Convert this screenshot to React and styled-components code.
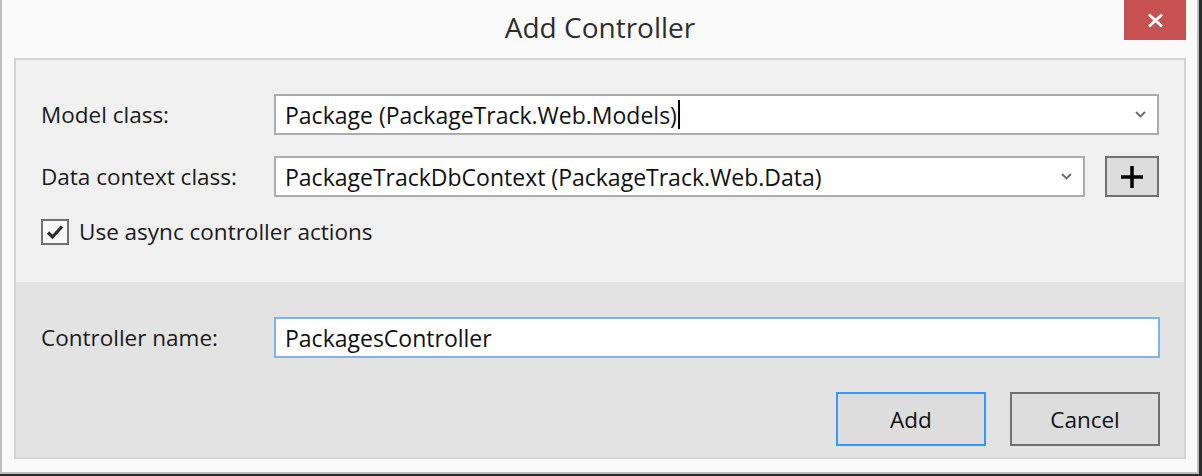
import styled, { createGlobalStyle } from 'styled-components';

const GlobalStyle = createGlobalStyle`
  html, body {
    margin: 0;
    padding: 0;
    background: #2b2b2b;
  }
  body {
    font-family: "Open Sans", "Noto Sans", sans-serif;
  }
`;

export default function App() {
  return (
    <>
      <GlobalStyle />
      <Window>
        <TitleBar>
          <span />
          <Title>Add Controller</Title>
          <CloseButton type="button" aria-label="Close">
            <svg width="17" height="15" viewBox="0 0 17 15">
              <path d="M2 1.5 L15 13.5 M15 1.5 L2 13.5" stroke="#fff" strokeWidth="3" />
            </svg>
          </CloseButton>
        </TitleBar>
        <Panel>
          <FormSection>
            <FieldGrid>
              <Label>Model class:</Label>
              <Select>
                <SelectText>
                  Package (PackageTrack.Web.Models)
                  <Caret />
                </SelectText>
                <Chevron />
              </Select>

              <Label>Data context class:</Label>
              <InlineRow>
                <Select>
                  <SelectText>PackageTrackDbContext (PackageTrack.Web.Data)</SelectText>
                  <Chevron />
                </Select>
                <PlusButton type="button" aria-label="Add data context">
                  <svg width="24" height="24" viewBox="0 0 24 24">
                    <path d="M12 1 V23 M1 12 H23" stroke="#000" strokeWidth="3.5" />
                  </svg>
                </PlusButton>
              </InlineRow>
            </FieldGrid>
            <CheckRow>
              <CheckBox>
                <svg width="18" height="16" viewBox="0 0 18 16">
                  <path d="M2 8.5 L6.5 13 L16 2.5" stroke="#2a2a2a" strokeWidth="3.2" fill="none" />
                </svg>
              </CheckBox>
              <CheckLabel>Use async controller actions</CheckLabel>
            </CheckRow>
          </FormSection>

          <FooterSection>
            <FieldGrid>
              <Label>Controller name:</Label>
              <TextBox>PackagesController</TextBox>
            </FieldGrid>
            <ButtonRow>
              <DialogButton type="button" $primary>Add</DialogButton>
              <DialogButton type="button">Cancel</DialogButton>
            </ButtonRow>
          </FooterSection>
        </Panel>
      </Window>
    </>
  );
}

function Chevron() {
  return (
    <ChevronIcon width="11" height="7" viewBox="0 0 11 7">
      <path d="M1 1 L5.5 5.5 L10 1" stroke="#6a6a6a" strokeWidth="1.8" fill="none" />
    </ChevronIcon>
  );
}

const Window = styled.div`
  box-sizing: border-box;
  width: 1199px;
  height: 474px;
  background: #fafafa;
  border: 2px solid #bdbdbd;
  border-top: none;
  padding: 0 11px 13px 12px;
  display: flex;
  flex-direction: column;
`;

const TitleBar = styled.div`
  height: 58px;
  flex: none;
  display: grid;
  grid-template-columns: 1fr auto 1fr;
`;

const Title = styled.h1`
  margin: 0;
  padding-top: 10px;
  font-size: 28px;
  line-height: 34px;
  font-weight: 400;
  color: #2e2e2e;
`;

const CloseButton = styled.button`
  justify-self: end;
  align-self: start;
  width: 62px;
  height: 40px;
  border: none;
  padding: 0;
  background: #c75050;
  display: flex;
  align-items: center;
  justify-content: center;
`;

const Panel = styled.div`
  flex: 1;
  display: flex;
  flex-direction: column;
  border: 2px solid #d5d5d5;
`;

const FormSection = styled.div`
  flex: none;
  height: 222px;
  box-sizing: border-box;
  background: #f0f0f0;
  padding: 34px 25px 0 25px;
`;

const FooterSection = styled.div`
  flex: 1;
  background: #e3e3e3;
  padding: 35px 24px 0 25px;
`;

const FieldGrid = styled.div`
  display: grid;
  grid-template-columns: 233px 1fr;
  row-gap: 21px;
  align-items: center;
`;

const Label = styled.div`
  font-size: 22.5px;
  color: #1a1a1a;
`;

const InlineRow = styled.div`
  display: flex;
  gap: 20px;
  align-items: center;
`;

const Select = styled.div`
  flex: 1;
  box-sizing: border-box;
  height: 41px;
  background: #fff;
  border: 2px solid #abadb3;
  display: flex;
  align-items: center;
  padding: 0 11px 0 9px;
`;

const SelectText = styled.div`
  flex: 1;
  display: flex;
  align-items: center;
  font-size: 23px;
  color: #111;
  white-space: nowrap;
`;

const Caret = styled.span`
  display: inline-block;
  width: 2px;
  height: 29px;
  margin-left: 1px;
  background: #000;
`;

const ChevronIcon = styled.svg`
  flex: none;
`;

const PlusButton = styled.button`
  flex: none;
  box-sizing: border-box;
  width: 54px;
  height: 41px;
  padding: 0;
  background: #dddddd;
  border: 2px solid #707070;
  display: flex;
  align-items: center;
  justify-content: center;
`;

const CheckRow = styled.label`
  display: flex;
  align-items: center;
  gap: 10px;
  margin-top: 19px;
`;

const CheckBox = styled.span`
  box-sizing: border-box;
  width: 28px;
  height: 26px;
  background: #f8f8f8;
  border: 2px solid #707070;
  display: flex;
  align-items: center;
  justify-content: center;
`;

const CheckLabel = styled.span`
  font-size: 22.5px;
  color: #1a1a1a;
`;

const TextBox = styled.div`
  box-sizing: border-box;
  height: 41px;
  background: #fff;
  border: 2px solid #7eb4ea;
  display: flex;
  align-items: center;
  padding-left: 9px;
  font-size: 23px;
  color: #111;
`;

const ButtonRow = styled.div`
  display: flex;
  justify-content: flex-end;
  gap: 24px;
  margin-top: 34px;
`;

const DialogButton = styled.button`
  box-sizing: border-box;
  width: 150px;
  height: 54px;
  background: #dddddd;
  border: 2px solid ${(p) => (p.$primary ? '#3399ff' : '#707070')};
  font-family: "Open Sans", "Noto Sans", sans-serif;
  font-size: 22.5px;
  color: #111;
`;
